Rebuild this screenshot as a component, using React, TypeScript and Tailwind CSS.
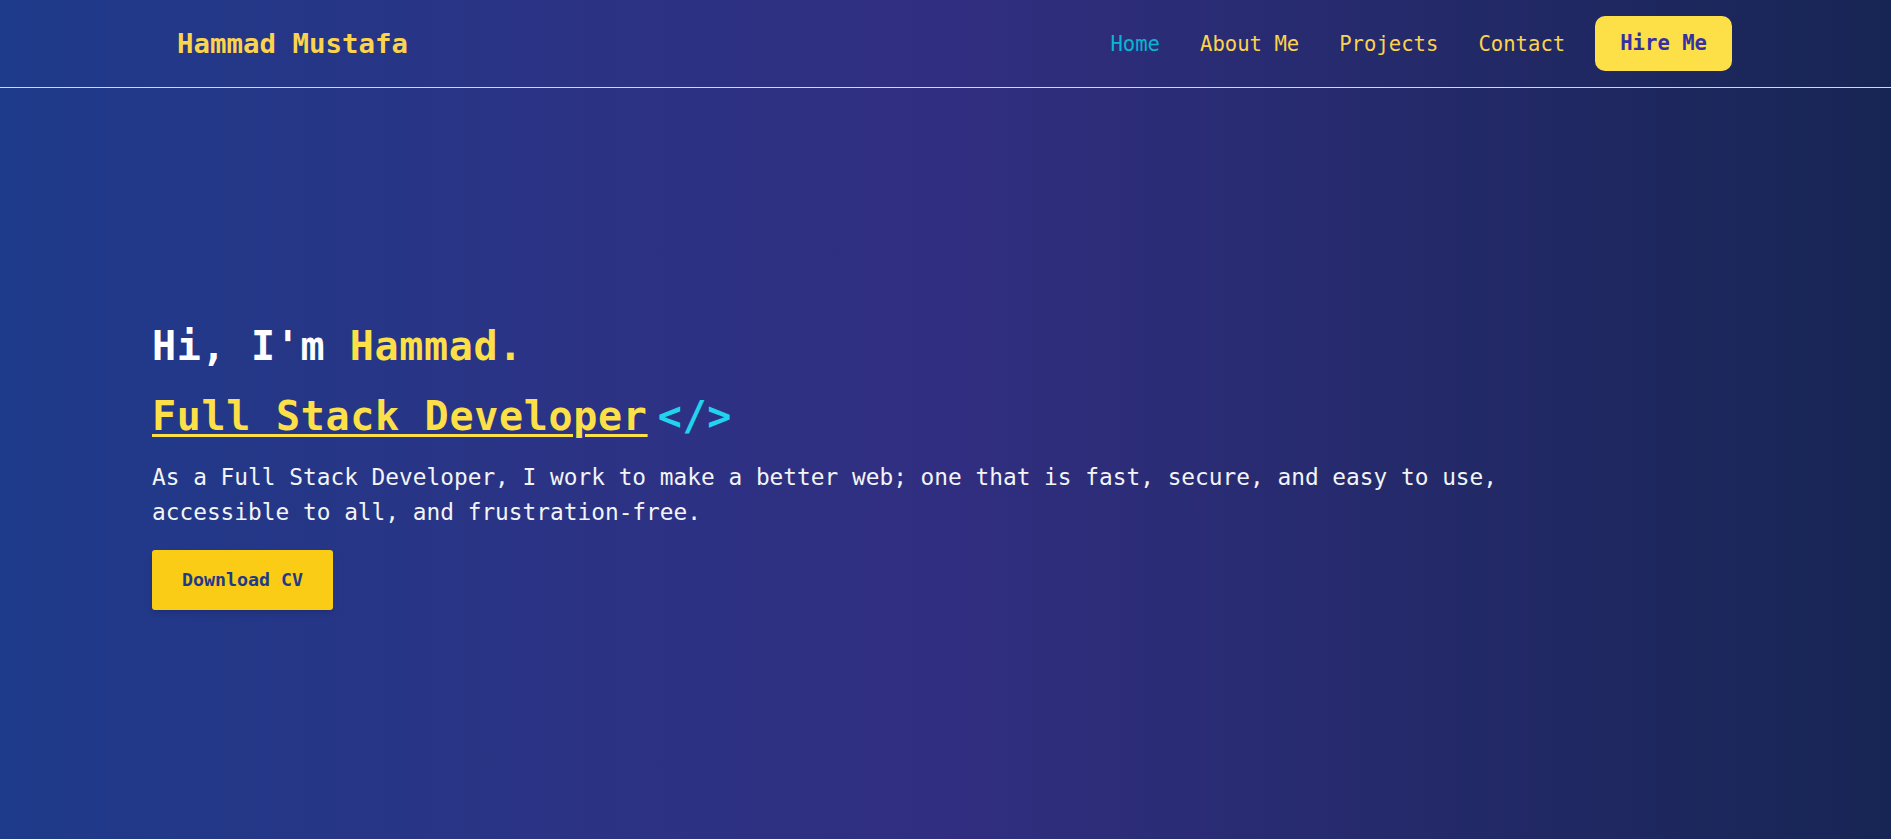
import React from 'react';

const navLinks = [
  { label: 'Home', active: true },
  { label: 'About Me', active: false },
  { label: 'Projects', active: false },
  { label: 'Contact', active: false },
];

const Navbar: React.FC = () => (
  <nav className="h-[88px] shrink-0 border-b border-[#fde047] flex items-center justify-between pl-[177px] pr-[159px]">
    <a href="#" className="text-[27.4px] font-bold text-[#fcd34d] leading-none">
      Hammad Mustafa
    </a>
    <div className="flex items-center">
      <ul className="flex items-center gap-[40px]">
        {navLinks.map(link => (
          <li key={link.label}>
            <a
              href="#"
              className={`text-[20.6px] leading-[28px] ${link.active ? 'text-[#06b6d4]' : 'text-[#fcd34d]'}`}
            >
              {link.label}
            </a>
          </li>
        ))}
      </ul>
      <button className="ml-[30px] h-[55px] px-[25px] flex items-center rounded-[10px] bg-[#fde047] text-[#3730a3] text-[20.6px] font-bold">
        Hire Me
      </button>
    </div>
  </nav>
);

const Hero: React.FC = () => (
  <section className="flex-1 flex items-center pl-[152px]">
    <div className="flex flex-col items-start">
      <h1 className="text-[40px] leading-[56px] font-bold tracking-[0.65px] text-white">
        Hi, I'm <span className="text-[#fde047]">Hammad.</span>
      </h1>
      <h2 className="mt-[14px] text-[40px] leading-[56px] font-bold tracking-[0.7px] text-[#fde047]">
        <span className="underline decoration-[3px] underline-offset-[4px]">Full Stack Developer</span>
        <span className="inline-block ml-[10px] text-[#22d3ee]">&lt;/&gt;</span>
      </h2>
      <p className="mt-4 max-w-[1440px] text-[22.8px] leading-[35px] text-[#f3f4f6]">
        As a Full Stack Developer, I work to make a better web; one that is fast, secure, and easy to use, accessible to all, and frustration-free.
      </p>
      <button className="mt-5 px-[30px] py-[15px] rounded-[3px] bg-[#facc15] text-[#1e3a8a] text-[18.3px] leading-[30px] font-bold shadow-md">
        Download CV
      </button>
    </div>
  </section>
);

export default function App() {
  return (
    <div className="h-screen flex flex-col bg-gradient-to-r from-[#1e3a8a] via-[#312e81] to-[#172554] font-['DejaVu_Sans_Mono','Liberation_Mono',monospace] overflow-hidden">
      <Navbar />
      <Hero />
    </div>
  );
}
